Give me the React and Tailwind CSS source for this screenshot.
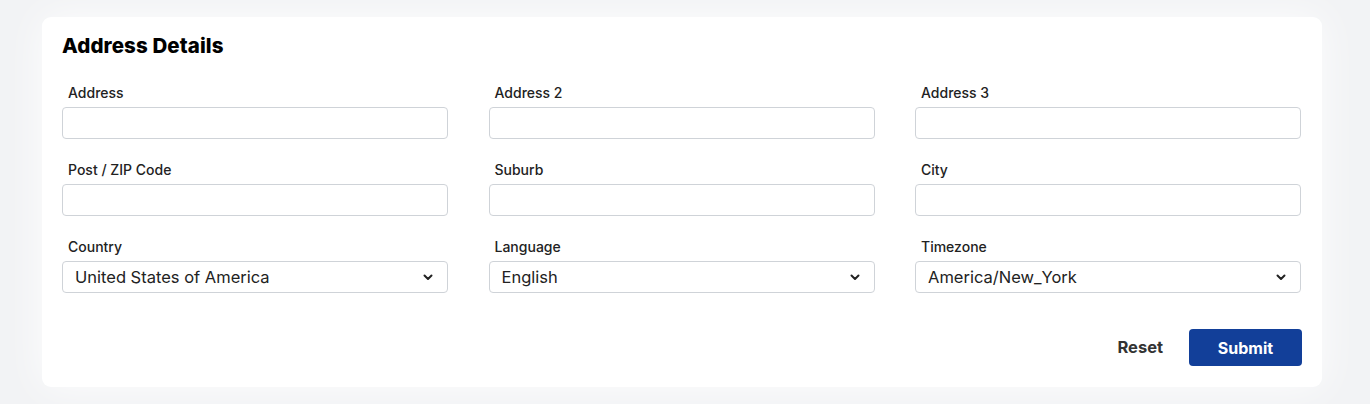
import React from "react";

const font = { fontFamily: "Inter, 'Noto Sans', sans-serif" };

function Chevron() {
  return (
    <svg width="10" height="7" viewBox="0 0 10 7" className="shrink-0">
      <path d="M1.5 1.5 L5 5 L8.5 1.5" fill="none" stroke="#222" strokeWidth="2" strokeLinecap="round" strokeLinejoin="round" />
    </svg>
  );
}

function Field({ label, value, select }) {
  return (
    <div className="flex flex-col">
      <label className="pl-1.5 text-[14px] leading-5 font-medium text-[#222]">{label}</label>
      {select ? (
        <div className="mt-1 h-8 rounded-[4px] border border-[#cfd3d8] bg-white flex items-center justify-between pl-[12px] pr-[14px]">
          <span className="text-[16.5px] text-[#222]">{value}</span>
          <Chevron />
        </div>
      ) : (
        <input className="mt-1 h-8 rounded-[4px] border border-[#cfd3d8] bg-white px-3 outline-none" />
      )}
    </div>
  );
}

export default function App() {
  return (
    <div className="w-[1370px] h-[404px] bg-[#f2f3f5] pt-[17px] overflow-hidden" style={font}>
      <div className="ml-[42px] w-[1280px] bg-white rounded-[9px] shadow-[0_0_40px_rgba(255,255,255,0.9)] pt-[17px] pb-[21px] pl-5 pr-[21px]">
        <h2 className="text-[20.5px] leading-6 font-extrabold text-black tracking-[0.1px]">Address Details</h2>
        <div className="mt-[25px] grid grid-cols-[repeat(3,386px)] justify-between gap-y-[21px]">
          <Field label="Address" />
          <Field label="Address 2" />
          <Field label="Address 3" />
          <Field label="Post / ZIP Code" />
          <Field label="Suburb" />
          <Field label="City" />
          <Field label="Country" value="United States of America" select />
          <Field label="Language" value="English" select />
          <Field label="Timezone" value="America/New_York" select />
        </div>
        <div className="mt-9 flex justify-end items-center">
          <button className="text-[16.5px] font-bold text-[#333] px-2 h-[37px] mr-[18px]">Reset</button>
          <button className="h-[37px] w-[113px] rounded-[4px] bg-[#123f99] text-white text-[16px] font-bold mr-[-1px]">Submit</button>
        </div>
      </div>
    </div>
  );
}
